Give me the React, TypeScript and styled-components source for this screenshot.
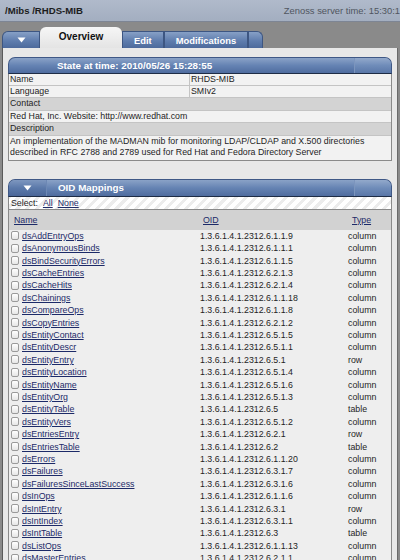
import styled, { createGlobalStyle } from 'styled-components';

const GlobalStyle = createGlobalStyle`
  html, body {
    margin: 0;
    padding: 0;
    background: #8a8a8a;
    overflow: hidden;
  }
  body {
    font-family: "Liberation Sans", Arial, sans-serif;
    font-size: 8.8px;
    color: #1e1e1e;
  }
`;

const oids: [string, string, string][] = [
  ['dsAddEntryOps', '1.3.6.1.4.1.2312.6.1.1.9', 'column'],
  ['dsAnonymousBinds', '1.3.6.1.4.1.2312.6.1.1.1', 'column'],
  ['dsBindSecurityErrors', '1.3.6.1.4.1.2312.6.1.1.5', 'column'],
  ['dsCacheEntries', '1.3.6.1.4.1.2312.6.2.1.3', 'column'],
  ['dsCacheHits', '1.3.6.1.4.1.2312.6.2.1.4', 'column'],
  ['dsChainings', '1.3.6.1.4.1.2312.6.1.1.18', 'column'],
  ['dsCompareOps', '1.3.6.1.4.1.2312.6.1.1.8', 'column'],
  ['dsCopyEntries', '1.3.6.1.4.1.2312.6.2.1.2', 'column'],
  ['dsEntityContact', '1.3.6.1.4.1.2312.6.5.1.5', 'column'],
  ['dsEntityDescr', '1.3.6.1.4.1.2312.6.5.1.1', 'column'],
  ['dsEntityEntry', '1.3.6.1.4.1.2312.6.5.1', 'row'],
  ['dsEntityLocation', '1.3.6.1.4.1.2312.6.5.1.4', 'column'],
  ['dsEntityName', '1.3.6.1.4.1.2312.6.5.1.6', 'column'],
  ['dsEntityOrg', '1.3.6.1.4.1.2312.6.5.1.3', 'column'],
  ['dsEntityTable', '1.3.6.1.4.1.2312.6.5', 'table'],
  ['dsEntityVers', '1.3.6.1.4.1.2312.6.5.1.2', 'column'],
  ['dsEntriesEntry', '1.3.6.1.4.1.2312.6.2.1', 'row'],
  ['dsEntriesTable', '1.3.6.1.4.1.2312.6.2', 'table'],
  ['dsErrors', '1.3.6.1.4.1.2312.6.1.1.20', 'column'],
  ['dsFailures', '1.3.6.1.4.1.2312.6.3.1.7', 'column'],
  ['dsFailuresSinceLastSuccess', '1.3.6.1.4.1.2312.6.3.1.6', 'column'],
  ['dsInOps', '1.3.6.1.4.1.2312.6.1.1.6', 'column'],
  ['dsIntEntry', '1.3.6.1.4.1.2312.6.3.1', 'row'],
  ['dsIntIndex', '1.3.6.1.4.1.2312.6.3.1.1', 'column'],
  ['dsIntTable', '1.3.6.1.4.1.2312.6.3', 'table'],
  ['dsListOps', '1.3.6.1.4.1.2312.6.1.1.13', 'column'],
  ['dsMasterEntries', '1.3.6.1.4.1.2312.6.2.1.1', 'column'],
];

const DownArrow = () => (
  <svg width="9" height="6" viewBox="0 0 9 6">
    <path d="M0.5 0.5 H8.5 L4.5 5.5 Z" fill="#fff" />
  </svg>
);

const App = () => {
  return (
    <Page>
      <GlobalStyle />
      <TopBar>
        <Breadcrumb>/Mibs /RHDS-MIB</Breadcrumb>
        <ServerTime>Zenoss server time: 15:30:1</ServerTime>
      </TopBar>

      <TabStrip>
        <MenuTab>
          <DownArrow />
        </MenuTab>
        <Tab $active>Overview</Tab>
        <Tab>Edit</Tab>
        <Tab>Modifications</Tab>
        <TabEnd />
      </TabStrip>

      <Panel>
        <Section>
          <SectionHeader>
            <HeaderTitle>State at time: 2010/05/26 15:28:55</HeaderTitle>
            <HeaderCap />
          </SectionHeader>
          <InfoTable>
            <InfoRow>
              <InfoLabel>Name</InfoLabel>
              <InfoValue>RHDS-MIB</InfoValue>
            </InfoRow>
            <InfoRow>
              <InfoLabel>Language</InfoLabel>
              <InfoValue>SMIv2</InfoValue>
            </InfoRow>
            <InfoWide $shade>Contact</InfoWide>
            <InfoWide>Red Hat, Inc. Website: http://www.redhat.com</InfoWide>
            <InfoWide $shade>Description</InfoWide>
            <InfoWide>
              An implementation of the MADMAN mib for monitoring LDAP/CLDAP and X.500 directories
              described in RFC 2788 and 2789 used for Red Hat and Fedora Directory Server
            </InfoWide>
          </InfoTable>
        </Section>

        <Section $gap>
          <SectionHeader $tall>
            <HeaderMenu>
              <DownArrow />
            </HeaderMenu>
            <HeaderTitle $left={11}>OID Mappings</HeaderTitle>
            <HeaderCap />
          </SectionHeader>
          <SelectBar>
            Select:
            <Link>All</Link>
            <Link>None</Link>
          </SelectBar>
          <OidHead>
            <ColHead>
              <Link>Name</Link>
            </ColHead>
            <ColHead>
              <Link>OID</Link>
            </ColHead>
            <ColHead $pad={4}>
              <Link>Type</Link>
            </ColHead>
          </OidHead>
          <OidBody>
            {oids.map(([name, oid, type]) => (
              <OidRow key={name}>
                <NameCell>
                  <Check />
                  <Link>{name}</Link>
                </NameCell>
                <Cell>{oid}</Cell>
                <Cell>{type}</Cell>
              </OidRow>
            ))}
          </OidBody>
        </Section>
      </Panel>
    </Page>
  );
};

export default App;

const Page = styled.div`
  width: 400px;
  height: 560px;
  overflow: hidden;
  display: flex;
  flex-direction: column;
`;

const TopBar = styled.div`
  height: 21px;
  flex-shrink: 0;
  display: flex;
  align-items: center;
  justify-content: space-between;
  padding: 0 0 0 5px;
  background: linear-gradient(#b0bacb, #a3aec0);
  border-bottom: 1px solid #7d8594;
  white-space: nowrap;
  overflow: hidden;
`;

const Breadcrumb = styled.div`
  font-weight: bold;
  font-size: 9.6px;
  color: #1c1c1c;
`;

const ServerTime = styled.div`
  font-size: 9.4px;
  color: #505560;
`;

const TabStrip = styled.div`
  display: flex;
  align-items: flex-end;
  height: 26px;
  padding-left: 2px;
  flex-shrink: 0;
`;

const blueTab = `
  background: linear-gradient(#87a0c6, #5f7dae 55%, #4d6a9c);
  border: 1px solid #3d5682;
  border-bottom: none;
  color: #fff;
`;

const MenuTab = styled.div`
  ${blueTab}
  width: 38px;
  height: 17px;
  box-sizing: border-box;
  border-radius: 6px 0 0 0;
  display: flex;
  align-items: center;
  justify-content: center;
`;

const Tab = styled.div<{ $active?: boolean }>`
  ${(p) => (p.$active ? '' : blueTab)}
  height: ${(p) => (p.$active ? '21px' : '17px')};
  padding: 0 11px;
  display: flex;
  align-items: center;
  font-weight: bold;
  font-size: 9.4px;
  box-sizing: border-box;
  ${(p) =>
    p.$active &&
    `
    width: 82px;
    padding: 0 0 3px;
    justify-content: center;
    background: linear-gradient(#f6f6f6, #e4e4e4);
    border-radius: 6px 6px 0 0;
    color: #111;
    font-size: 10px;
  `}
`;

const TabEnd = styled.div`
  ${blueTab}
  width: 15px;
  height: 17px;
  box-sizing: border-box;
  border-radius: 0 6px 0 0;
`;

const Panel = styled.div`
  flex: 1;
  margin: 0 2px;
  padding: 9px 5px 0 5px;
  background: #e8e8e8;
  border-left: 1px solid #5a5a5a;
  border-right: 1px solid #6a6a6a;
  display: flex;
  flex-direction: column;
`;

const Section = styled.div<{ $gap?: boolean }>`
  margin-top: ${(p) => (p.$gap ? '18px' : '0')};
  display: flex;
  flex-direction: column;
`;

const SectionHeader = styled.div<{ $tall?: boolean }>`
  height: ${(p) => (p.$tall ? '18px' : '17px')};
  display: flex;
  align-items: center;
  background: linear-gradient(#8aa2c7, #6583b3 50%, #4f6c9f);
  border: 1px solid #3f5886;
  border-bottom: 1px solid #1e2c45;
  border-radius: 7px 7px 0 0;
  color: #fff;
  box-sizing: border-box;
  overflow: hidden;
`;

const HeaderMenu = styled.div`
  width: 37px;
  align-self: stretch;
  display: flex;
  align-items: center;
  justify-content: center;
  background: linear-gradient(#7e97bf, #5b79aa 50%, #4a6698);
  border-right: 1px solid #6d88b4;
`;

const HeaderTitle = styled.div<{ $left?: number }>`
  flex: 1;
  padding-left: ${(p) => p.$left ?? 48}px;
  font-weight: bold;
  font-size: 9.8px;
  white-space: nowrap;
`;

const HeaderCap = styled.div`
  width: 36px;
  align-self: stretch;
  border-left: 1px solid #7c95bd;
  background: linear-gradient(#93a9cb, #6f8cb9 50%, #5a77a8);
`;

const InfoTable = styled.div`
  border: 1px solid #8a8a8a;
  border-top: none;
  background: #f2f2f2;
`;

const InfoRow = styled.div`
  display: grid;
  grid-template-columns: 181px 1fr;
  border-bottom: 1px solid #c4c4c4;
  height: 12px;
  box-sizing: border-box;
  line-height: 11px;
`;

const InfoLabel = styled.div`
  padding-left: 1px;
  border-right: 1px solid #c4c4c4;
`;

const InfoValue = styled.div`
  padding-left: 1px;
`;

const InfoWide = styled.div<{ $shade?: boolean }>`
  padding: 0 1px;
  min-height: 12px;
  line-height: 11.5px;
  background: ${(p) => (p.$shade ? '#d3d3d3' : '#f2f2f2')};
  border-bottom: 1px solid #c4c4c4;
  box-sizing: border-box;
  &:last-child {
    border-bottom: none;
    padding-bottom: 1px;
  }
`;

const SelectBar = styled.div`
  height: 13px;
  display: flex;
  align-items: center;
  gap: 5px;
  padding-left: 2px;
  background: repeating-linear-gradient(-45deg, #ffffff 0 4px, #ececec 4px 7px);
  border: 1px solid #8a8a8a;
  border-top: none;
  box-sizing: border-box;
`;

const columns = `
  display: grid;
  grid-template-columns: 189px 148px 1fr;
  padding-left: 2px;
  border-left: 1px solid #8a8a8a;
  border-right: 1px solid #8a8a8a;
`;

const Link = styled.span`
  color: #1c2a68;
  text-decoration: underline;
  cursor: pointer;
`;

const OidHead = styled.div`
  ${columns}
  height: 20px;
  background: #d2d2d2;
`;

const ColHead = styled.div<{ $pad?: number }>`
  display: flex;
  align-items: center;
  padding-left: ${(p) => p.$pad ?? 3}px;
`;

const OidBody = styled.div`
  ${columns}
  grid-auto-rows: 12.42px;
  background: #eeeeee;
  flex: 1;
`;

const OidRow = styled.div`
  display: contents;
`;

const Cell = styled.div`
  display: flex;
  align-items: center;
  white-space: nowrap;
`;

const NameCell = styled.div`
  display: flex;
  align-items: center;
  gap: 3px;
  white-space: nowrap;
`;

const Check = styled.span`
  width: 8px;
  height: 9px;
  border: 1px solid #9a9a9a;
  border-radius: 2px;
  background: linear-gradient(#ffffff, #e6e6e6);
  box-sizing: border-box;
  flex-shrink: 0;
`;
